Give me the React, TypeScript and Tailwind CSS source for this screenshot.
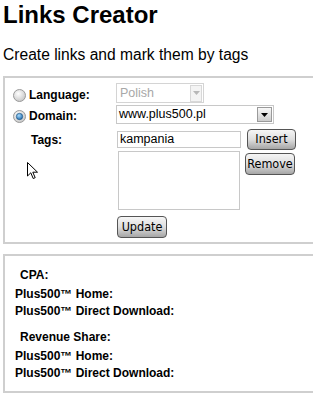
import React from "react";

const Radio = ({ checked }: { checked?: boolean }) => (
  <svg width="13" height="13" viewBox="0 0 13 13" className="shrink-0">
    <defs>
      <radialGradient id={checked ? "rgc" : "rgu"} cx="40%" cy="35%" r="70%">
        <stop offset="0%" stopColor="#ffffff" />
        <stop offset="100%" stopColor="#c4c4c4" />
      </radialGradient>
      <radialGradient id="dot" cx="40%" cy="35%" r="70%">
        <stop offset="0%" stopColor="#a8dcff" />
        <stop offset="100%" stopColor="#1a66a8" />
      </radialGradient>
    </defs>
    <circle cx="6.5" cy="6.5" r="6" fill={`url(#${checked ? "rgc" : "rgu"})`} stroke="#9a9a9a" strokeWidth="1" />
    {checked && <circle cx="6.5" cy="6.5" r="3.2" fill="url(#dot)" stroke="#1b4f7c" strokeWidth="0.6" />}
  </svg>
);

const Btn = ({ children, className = "" }: { children: React.ReactNode; className?: string }) => (
  <div
    className={`flex items-center justify-center rounded-[4px] border border-[#555555] bg-gradient-to-b from-[#f6f6f6] via-[#dedede] to-[#a6a6a6] text-[12.5px] text-black ${className}`}
    style={{ fontFamily: "'DejaVu Sans Condensed', 'DejaVu Sans', sans-serif" }}
  >
    {children}
  </div>
);

const Arrow = ({ disabled }: { disabled?: boolean }) => (
  <div
    className={`flex items-center justify-center border ${disabled ? "border-[#d8d8d8] bg-[#f4f4f4] w-[12px] h-[17px]" : "border-[#9a9a9a] bg-gradient-to-b from-[#f8f8f8] to-[#cdcdcd] w-[15px] h-[15px]"}`}
  >
    <svg width="7" height="4" viewBox="0 0 7 4">
      <path d="M0 0 L7 0 L3.5 4 Z" fill={disabled ? "#b8b8b8" : "#000"} />
    </svg>
  </div>
);

export default function App() {
  const sans = { fontFamily: "'Liberation Sans', Arial, sans-serif" };
  return (
    <div className="w-[313px] h-[397px] overflow-hidden bg-white relative" style={sans}>
      <div className="pl-[3px]">
        <h1 className="text-[24px] font-bold leading-[28px] pt-[1px] text-black">Links Creator</h1>
        <p className="text-[15.6px] leading-[19px] mt-[16px] text-black">Create links and mark them by tags</p>

        {/* Box 1 */}
        <div className="mt-[12px] w-[400px] h-[168px] border-2 border-[#cfcfcf] pt-[5px] flex">
          <div className="w-[111px] shrink-0 pt-[2px]">
            <div className="flex items-center h-[20px] pl-[8px] gap-[3px]">
              <Radio />
              <span className="text-[12px] font-bold text-black">Language:</span>
            </div>
            <div className="flex items-center h-[20px] mt-[1px] pl-[8px] gap-[3px]">
              <Radio checked />
              <span className="text-[12px] font-bold text-black">Domain:</span>
            </div>
            <div className="h-[20px] mt-[4px] pl-[26px] flex items-center">
              <span className="text-[12px] font-bold text-black">Tags:</span>
            </div>
          </div>
          <div className="flex flex-col">
            <div className="w-[88px] h-[20px] border border-[#d4d4d4] flex items-center justify-between pl-[3px] pr-[1px]">
              <span className="text-[12.5px] text-[#a8a8a8]">Polish</span>
              <Arrow disabled />
            </div>
            <div className="w-[158px] h-[19px] mt-[2px] border border-[#c8c8c8] flex items-center justify-between pl-[2px] pr-[1px]">
              <span className="text-[12.5px] text-black">www.plus500.pl</span>
              <Arrow />
            </div>
            <div className="flex mt-[7px]">
              <div className="flex flex-col">
                <div className="ml-[1px] w-[124px] h-[17px] border border-[#c8c8c8] flex items-center pl-[2px]">
                  <span className="text-[12.5px] text-black">kampania</span>
                </div>
                <div className="ml-[2px] mt-[3px] w-[122px] h-[59px] border border-[#c8c8c8]" />
              </div>
              <div className="flex flex-col">
                <Btn className="ml-[6px] -mt-[2px] w-[49px] h-[21px]">Insert</Btn>
                <Btn className="ml-[4px] mt-[3px] w-[50px] h-[22px]">Remove</Btn>
              </div>
            </div>
            <Btn className="mt-[6px] ml-[1px] w-[50px] h-[22px]">Update</Btn>
          </div>
        </div>

        {/* Box 2 */}
        <div className="mt-[10px] w-[400px] h-[139px] border-2 border-[#cfcfcf] pt-[11px] text-[12px] font-bold text-black leading-[17px]">
          <div className="pl-[15px]">CPA:</div>
          <div className="pl-[10px] mt-[2px]">Plus500™ Home:</div>
          <div className="pl-[10px]">Plus500™ Direct Download:</div>
          <div className="pl-[15px] mt-[9px]">Revenue Share:</div>
          <div className="pl-[10px] mt-[2px]">Plus500™ Home:</div>
          <div className="pl-[10px]">Plus500™ Direct Download:</div>
        </div>
      </div>

      {/* mouse cursor */}
      <svg className="absolute left-[27px] top-[162px]" width="12" height="18" viewBox="0 0 12 18">
        <path d="M0.5 0.5 L0.5 14 L3.8 10.8 L6.2 16.5 L8.2 15.7 L5.8 10.2 L10.5 10.2 Z" fill="#fff" stroke="#000" strokeWidth="1" strokeLinejoin="round" />
      </svg>
    </div>
  );
}
